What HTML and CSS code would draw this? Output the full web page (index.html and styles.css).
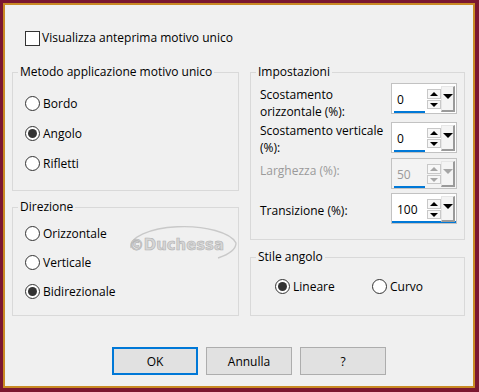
FILE: index.html
```html
<!DOCTYPE html>
<html lang="it">
<head>
<meta charset="utf-8">
<title>Motivo unico</title>
<link rel="stylesheet" href="styles.css">
</head>
<body>
<div class="frame">
  <div class="dialog">
    <div class="check-row"><span class="checkbox"></span><span>Visualizza anteprima motivo unico</span></div>

    <div class="columns">
      <div class="col col-left">
        <div class="group g-method">
          <div class="group-title">Metodo applicazione motivo unico</div>
          <div class="radio-list list-method">
            <div class="radio-row"><span class="radio"></span><span>Bordo</span></div>
            <div class="radio-row"><span class="radio checked"></span><span>Angolo</span></div>
            <div class="radio-row"><span class="radio"></span><span>Rifletti</span></div>
          </div>
        </div>
        <div class="group g-dir">
          <div class="group-title">Direzione</div>
          <div class="radio-list list-dir">
            <div class="radio-row"><span class="radio"></span><span>Orizzontale</span></div>
            <div class="radio-row"><span class="radio"></span><span>Verticale</span></div>
            <div class="radio-row"><span class="radio checked"></span><span>Bidirezionale</span></div>
          </div>
        </div>
      </div>

      <div class="col col-right">
        <div class="group g-settings">
          <div class="group-title">Impostazioni</div>
          <div class="settings">
            <div class="spin-row r1">
              <div class="spin-label">Scostamento<br>orizzontale (%):</div>
              <div class="spin"><span class="spin-field">0</span><span class="spin-arrows"><span class="spin-btn up"></span><span class="spin-btn down"></span></span><span class="spin-drop"></span></div>
            </div>
            <div class="spin-row r2">
              <div class="spin-label">Scostamento verticale<br>(%):</div>
              <div class="spin"><span class="spin-field">0</span><span class="spin-arrows"><span class="spin-btn up"></span><span class="spin-btn down"></span></span><span class="spin-drop"></span></div>
            </div>
            <div class="spin-row r3 disabled">
              <div class="spin-label">Larghezza (%):</div>
              <div class="spin"><span class="spin-field">50</span><span class="spin-arrows"><span class="spin-btn up"></span><span class="spin-btn down"></span></span><span class="spin-drop"></span></div>
            </div>
            <div class="spin-row r4">
              <div class="spin-label">Transizione (%):</div>
              <div class="spin focus"><span class="spin-field">100</span><span class="spin-arrows"><span class="spin-btn up"></span><span class="spin-btn down"></span></span><span class="spin-drop"></span></div>
            </div>
          </div>
        </div>
        <div class="group g-corner">
          <div class="group-title">Stile angolo</div>
          <div class="inline-radios">
            <div class="radio-row first"><span class="radio checked"></span><span>Lineare</span></div>
            <div class="radio-row"><span class="radio"></span><span>Curvo</span></div>
          </div>
        </div>
      </div>
    </div>

    <div class="buttons">
      <button class="btn btn-primary">OK</button>
      <button class="btn">Annulla</button>
      <button class="btn">?</button>
    </div>

    <svg class="watermark" width="124" height="52" viewBox="0 0 124 52">
      <path d="M 11 33 A 53 20 0 0 1 116 28 A 53 20 0 0 1 98 43" fill="none" stroke="#c9c9c9" stroke-width="1.4"/>
      <text x="9" y="35" textLength="95" lengthAdjust="spacingAndGlyphs" class="wm-text">©Duchessa</text>
    </svg>
  </div>
</div>
</body>
</html>
```

FILE: styles.css
```css
* { box-sizing: border-box; }

body {
  margin: 0;
  font-family: "Open Sans", "Noto Sans", sans-serif;
  font-size: 12px;
  color: #000;
}

.frame {
  width: 479px;
  height: 392px;
  border-style: solid;
  border-color: #7a1730;
  border-width: 3px 4px 4px 3px;
}

.dialog {
  position: relative;
  height: 100%;
  border: 2px solid #c98a24;
  background: #f0f0f0;
  padding: 25px 0 0 7px;
}

.check-row {
  display: flex;
  align-items: center;
  gap: 2px;
  height: 16px;
  margin-left: 13px;
  line-height: 16px;
}

.checkbox {
  width: 15px;
  height: 15px;
  border: 1px solid #333;
  background: #fff;
}

.columns {
  display: flex;
  gap: 11px;
  margin-top: 26px;
}

.col { display: flex; flex-direction: column; }
.col-left { width: 227px; gap: 16px; }
.col-right { width: 215px; gap: 17px; }

.group { border: 1px solid #d9d9d9; }
.g-method { height: 119px; }
.g-dir { height: 109px; }
.g-settings { height: 168px; }
.g-corner { height: 59px; }

.group-title {
  width: max-content;
  margin: -9px 0 0 5px;
  padding: 0 2px;
  background: #f0f0f0;
  line-height: 16px;
}

.radio-list {
  display: flex;
  flex-direction: column;
  padding-left: 12px;
}
.list-method { margin-top: 8px; }
.list-method .radio-row { height: 30px; }
.list-dir { margin-top: 4px; }
.list-dir .radio-row { height: 29px; }

.radio-row {
  display: flex;
  align-items: center;
  gap: 3px;
}

.radio {
  width: 15px;
  height: 15px;
  border: 1px solid #333;
  border-radius: 50%;
  background: #fff;
  display: flex;
  align-items: center;
  justify-content: center;
}
.radio.checked::after {
  content: "";
  width: 9px;
  height: 9px;
  border-radius: 50%;
  background: #333;
}

.inline-radios {
  display: flex;
  margin-top: 6px;
  padding-left: 24px;
}
.inline-radios .radio-row { height: 30px; }
.inline-radios .first { width: 97px; }

.settings { padding: 3px 7px 0 9px; }

.spin-row {
  display: flex;
  justify-content: space-between;
  align-items: flex-start;
  height: 31px;
}
.spin-label { line-height: 17px; white-space: nowrap; }
.r1 .spin-label { padding-top: 3px; }
.r2 { margin-top: 8px; }
.r3 { margin-top: 5px; }
.r3 .spin-label { padding-top: 4px; }
.r4 { margin-top: 4px; }
.r4 .spin-label { padding-top: 9px; }

.spin {
  display: flex;
  flex-shrink: 0;
  width: 66px;
  height: 31px;
  padding: 1px;
  border: 1px solid #c2c2c2;
  background: #fff;
}
.spin.focus { box-shadow: inset 0 -2px 0 #0078d7; }

.spin-field {
  display: flex;
  align-items: center;
  width: 32px;
  height: 28px;
  margin-left: 1px;
  padding: 3px 0 0 3px;
  border-bottom: 2px solid #0078d7;
}

.spin-arrows {
  display: flex;
  flex-direction: column;
  width: 14px;
  margin-left: 2px;
  padding-top: 4px;
}

.spin-btn {
  display: flex;
  align-items: center;
  justify-content: center;
  border: 1px solid #c8c8c8;
  background: #f7f7f7;
}
.spin-btn.up { height: 10px; }
.spin-btn.down { height: 9px; margin-top: 1px; }
.spin-btn.up::after {
  content: "";
  border-left: 4px solid transparent;
  border-right: 4px solid transparent;
  border-bottom: 4px solid #000;
}
.spin-btn.down::after {
  content: "";
  border-left: 4px solid transparent;
  border-right: 4px solid transparent;
  border-top: 4px solid #000;
}

.spin-drop {
  display: flex;
  justify-content: center;
  width: 14px;
  height: 26px;
  margin-top: 1px;
  padding-top: 7px;
  background: #f4f4f4;
  border-top: 1px solid #e6e6e6;
  border-left: 1px solid #e6e6e6;
  border-right: 2px solid #9a9a9a;
  border-bottom: 2px solid #9a9a9a;
}
.spin-drop::after {
  content: "";
  width: 0;
  height: 0;
  border-left: 5px solid transparent;
  border-right: 5px solid transparent;
  border-top: 5px solid #000;
}

.disabled .spin-label,
.disabled .spin-field { color: #9a9a9a; }
.disabled .spin { background: #f3f3f3; }
.disabled .spin-btn.up::after { border-bottom-color: #a6a6a6; }
.disabled .spin-btn.down::after { border-top-color: #a6a6a6; }
.disabled .spin-drop::after { border-top-color: #a6a6a6; }

.buttons {
  display: flex;
  gap: 8px;
  margin: 31px 0 0 100px;
}

.btn {
  display: flex;
  align-items: center;
  justify-content: center;
  width: 86px;
  height: 28px;
  padding: 0;
  border: 1px solid #adadad;
  background: #e1e1e1;
  font: inherit;
  color: #000;
}
.btn-primary { border: 2px solid #0078d7; }

.watermark {
  position: absolute;
  left: 115px;
  top: 210px;
}
.wm-text {
  font-family: "DejaVu Sans", sans-serif;
  font-weight: bold;
  font-size: 15px;
  fill: #d6d6d6;
  stroke: #b2b2b2;
  stroke-width: 0.6;
}
```
